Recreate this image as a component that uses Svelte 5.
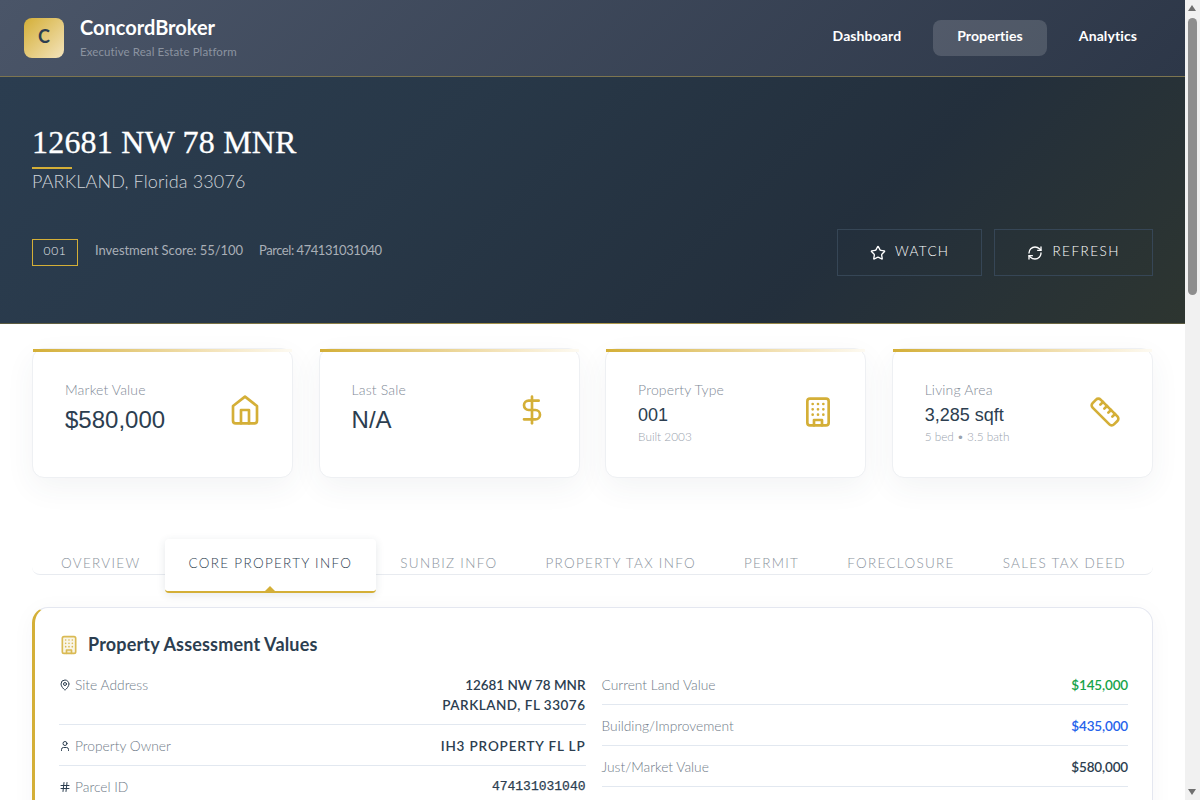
<script>
  const tabs = ['OVERVIEW', 'CORE PROPERTY INFO', 'SUNBIZ INFO', 'PROPERTY TAX INFO', 'PERMIT', 'FORECLOSURE', 'SALES TAX DEED'];
  const rightRows = [
    { label: 'Current Land Value', value: '$145,000', cls: 'green' },
    { label: 'Building/Improvement', value: '$435,000', cls: 'blue' },
    { label: 'Just/Market Value', value: '$580,000', cls: '' },
    { label: 'Assessed Value', value: '$580,000', cls: '' }
  ];
</script>

<div class="page">
  <header class="topbar">
    <div class="brand">
      <div class="logo">C</div>
      <div class="brand-text">
        <div class="brand-name">ConcordBroker</div>
        <div class="brand-sub">Executive Real Estate Platform</div>
      </div>
    </div>
    <nav class="nav">
      <span class="nav-item">Dashboard</span>
      <span class="nav-item active">Properties</span>
      <span class="nav-item">Analytics</span>
    </nav>
  </header>

  <section class="hero">
    <h1>12681 NW 78 MNR</h1>
    <div class="rule"></div>
    <div class="city">PARKLAND, Florida 33076</div>
    <div class="hero-row">
      <div class="meta">
        <span class="chip">001</span>
        <span class="meta-text">Investment Score: 55/100</span>
        <span class="meta-text parcel">Parcel: 474131031040</span>
      </div>
      <div class="actions">
        <span class="btn">
          <svg viewBox="0 0 24 24" class="btn-icon"><path d="M11.525 2.295a.53.53 0 0 1 .95 0l2.31 4.679a2.123 2.123 0 0 0 1.595 1.16l5.166.756a.53.53 0 0 1 .294.904l-3.736 3.638a2.123 2.123 0 0 0-.611 1.878l.882 5.14a.53.53 0 0 1-.771.56l-4.618-2.428a2.122 2.122 0 0 0-1.973 0L6.396 21.01a.53.53 0 0 1-.77-.56l.881-5.139a2.122 2.122 0 0 0-.611-1.879L2.16 9.795a.53.53 0 0 1 .294-.906l5.165-.755a2.122 2.122 0 0 0 1.597-1.16z"/></svg>
          <span class="btn-label watch">WATCH</span>
        </span>
        <span class="btn">
          <svg viewBox="0 0 24 24" class="btn-icon"><path d="M3 12a9 9 0 0 1 9-9 9.75 9.75 0 0 1 6.74 2.74L21 8"/><path d="M21 3v5h-5"/><path d="M21 12a9 9 0 0 1-9 9 9.75 9.75 0 0 1-6.74-2.74L3 16"/><path d="M8 16H3v5"/></svg>
          <span class="btn-label">REFRESH</span>
        </span>
      </div>
    </div>
  </section>

  <main class="main">
    <div class="stats">
      <div class="stat">
        <div class="stat-body">
          <div class="stat-label">Market Value</div>
          <div class="stat-value big">$580,000</div>
        </div>
        <svg viewBox="0 0 24 24" class="stat-icon"><path d="M3 9l9-7 9 7v11a2 2 0 0 1-2 2H5a2 2 0 0 1-2-2z"/><path d="M9 22V12h6v10"/></svg>
      </div>
      <div class="stat">
        <div class="stat-body">
          <div class="stat-label">Last Sale</div>
          <div class="stat-value big">N/A</div>
        </div>
        <svg viewBox="0 0 24 24" class="stat-icon"><path d="M12 2v20"/><path d="M17 5H9.5a3.5 3.5 0 0 0 0 7h5a3.5 3.5 0 0 1 0 7H6"/></svg>
      </div>
      <div class="stat tall">
        <div class="stat-body">
          <div class="stat-label">Property Type</div>
          <div class="stat-value">001</div>
          <div class="stat-note">Built 2003</div>
        </div>
        <svg viewBox="0 0 24 24" class="stat-icon"><rect x="4" y="2" width="16" height="20" rx="2"/><path d="M9 22v-4h6v4M8 6h.01M16 6h.01M12 6h.01M12 10h.01M12 14h.01M16 10h.01M16 14h.01M8 10h.01M8 14h.01"/></svg>
      </div>
      <div class="stat tall">
        <div class="stat-body">
          <div class="stat-label">Living Area</div>
          <div class="stat-value">3,285 sqft</div>
          <div class="stat-note">5 bed • 3.5 bath</div>
        </div>
        <svg viewBox="0 0 24 24" class="stat-icon"><path d="M21.3 15.3a2.4 2.4 0 0 1 0 3.4l-2.6 2.6a2.4 2.4 0 0 1-3.4 0L2.7 8.7a2.41 2.41 0 0 1 0-3.4l2.6-2.6a2.41 2.41 0 0 1 3.4 0Z"/><path d="m14.5 12.5 2-2M11.5 9.5l2-2M8.5 6.5l2-2M17.5 15.5l2-2"/></svg>
      </div>
    </div>

    <div class="tabs">
      {#each tabs as tab, i}
        <span class="tab" class:active={i === 1}>{tab}</span>
      {/each}
    </div>

    <section class="panel">
      <h2>
        <svg viewBox="0 0 24 24" class="title-icon"><rect x="4" y="2" width="16" height="20" rx="2"/><path d="M9 22v-4h6v4M8 6h.01M16 6h.01M12 6h.01M12 10h.01M12 14h.01M16 10h.01M16 14h.01M8 10h.01M8 14h.01"/></svg>
        Property Assessment Values
      </h2>
      <div class="columns">
        <div class="column">
          <div class="row">
            <span class="label"><svg viewBox="0 0 24 24" class="row-icon"><path d="M20 10c0 4.993-5.539 10.193-7.399 11.799a1 1 0 0 1-1.202 0C9.539 20.193 4 14.993 4 10a8 8 0 0 1 16 0"/><circle cx="12" cy="10" r="3"/></svg>Site Address</span>
            <span class="value"><span class="tight">12681 NW 78 MNR</span><br />PARKLAND, FL 33076</span>
          </div>
          <div class="row">
            <span class="label"><svg viewBox="0 0 24 24" class="row-icon"><path d="M19 21v-2a4 4 0 0 0-4-4H9a4 4 0 0 0-4 4v2"/><circle cx="12" cy="7" r="4"/></svg>Property Owner</span>
            <span class="value wide">IH3 PROPERTY FL LP</span>
          </div>
          <div class="row">
            <span class="label"><svg viewBox="0 0 24 24" class="row-icon"><path d="M4 9h16M4 15h16M10 3 8 21M16 3l-2 18"/></svg>Parcel ID</span>
            <span class="value mono">474131031040</span>
          </div>
        </div>
        <div class="column">
          {#each rightRows as r}
            <div class="row">
              <span class="label">{r.label}</span>
              <span class="value money {r.cls}">{r.value}</span>
            </div>
          {/each}
        </div>
      </div>
    </section>
  </main>
</div>

<div class="scrollbar" aria-hidden="true">
  <span class="arrow up"></span>
  <span class="thumb"></span>
  <span class="arrow down"></span>
</div>

<style>
  :global(body) {
    margin: 0;
    background: #fff;
  }
  .page {
    min-height: 2204px;
    margin-right: 15px;
    font-family: "Lato", "Liberation Sans", sans-serif;
    color: #2c3e50;
    background: #fff;
  }
  svg {
    fill: none;
    stroke: currentColor;
    stroke-width: 2;
    stroke-linecap: round;
    stroke-linejoin: round;
    flex: none;
  }

  .scrollbar {
    position: fixed;
    top: 0;
    right: 0;
    bottom: 0;
    width: 15px;
    background: #f1f1f1;
  }
  .thumb {
    position: absolute;
    left: 3px;
    top: 18px;
    width: 9px;
    height: 277px;
    border-radius: 5px;
    background: #8e8e8e;
  }
  .arrow {
    position: absolute;
    left: 3px;
    border-left: 4.5px solid transparent;
    border-right: 4.5px solid transparent;
  }
  .arrow.up {
    top: 5px;
    border-bottom: 6px solid #707070;
  }
  .arrow.down {
    bottom: 5px;
    border-top: 6px solid #707070;
  }

  .topbar {
    height: 76px;
    box-sizing: content-box;
    border-bottom: 1px solid #7d7550;
    background: linear-gradient(135deg, #4a5568 0%, #2d3748 100%);
    display: flex;
    align-items: center;
    justify-content: space-between;
    padding: 0 24px;
  }
  .brand {
    display: flex;
    align-items: center;
    gap: 16px;
  }
  .logo {
    box-sizing: border-box;
    width: 40px;
    height: 40px;
    padding-bottom: 4px;
    border-radius: 8px;
    background: linear-gradient(135deg, #d4af37 0%, #f4e4bc 100%);
    color: #2c3e50;
    font-weight: 700;
    font-size: 18px;
    display: flex;
    align-items: center;
    justify-content: center;
  }
  .brand-text {
    padding-bottom: 2px;
  }
  .brand-name {
    color: #fff;
    font-size: 20px;
    font-weight: 700;
    line-height: 24px;
  }
  .brand-sub {
    color: #8b93a0;
    font-size: 11.5px;
    line-height: 16px;
    margin-top: 5px;
    letter-spacing: 0.1px;
  }
  .nav {
    display: flex;
    gap: 8px;
  }
  .nav-item {
    color: #fff;
    font-size: 14px;
    font-weight: 700;
    line-height: 32px;
    padding: 0 24px 4px;
    border-radius: 8px;
    letter-spacing: 0.1px;
  }
  .nav-item.active {
    background: rgba(255, 255, 255, 0.15);
  }

  .hero {
    height: 246px;
    box-sizing: content-box;
    padding: 0 32px;
    border-bottom: 1px solid;
    border-image: linear-gradient(90deg, #5a5a40, #b09a4a 50%, #5a5a40) 1;
    background: linear-gradient(135deg, #2b3d50 0%, #283848 35%, #232f3c 70%, #2d3530 100%);
    overflow: hidden;
  }
  h1 {
    margin: 45px 0 0;
    font-family: "Liberation Serif", serif;
    font-size: 32px;
    font-weight: 400;
    line-height: 40px;
    color: #fff;
    letter-spacing: 0.2px;
    -webkit-text-stroke: 0.3px #fff;
  }
  .rule {
    width: 40px;
    height: 2px;
    margin-top: 5px;
    background: #d4af37;
  }
  .city {
    margin-top: 1px;
    color: #d0d4d9;
    font-size: 18px;
    line-height: 22px;
    font-weight: 300;
    letter-spacing: 0.15px;
  }
  .hero-row {
    display: flex;
    align-items: center;
    justify-content: space-between;
    margin-top: 37px;
  }
  .meta {
    display: flex;
    align-items: center;
    gap: 16px;
  }
  .chip {
    box-sizing: border-box;
    width: 46px;
    height: 27px;
    border: 1px solid #d4af37;
    color: #e5e8ec;
    font-size: 12px;
    font-weight: 300;
    line-height: 21px;
    text-align: center;
    letter-spacing: 0.7px;
    margin-right: 1px;
  }
  .meta-text {
    color: #a9afb7;
    font-size: 13px;
    line-height: 24px;
    padding-bottom: 5px;
    letter-spacing: -0.04px;
  }
  .meta-text.parcel {
    letter-spacing: -0.45px;
  }
  .actions {
    display: flex;
    gap: 12px;
  }
  .btn {
    box-sizing: border-box;
    height: 47px;
    padding: 0 32px;
    border: 1px solid #364656;
    color: #fff;
    font-size: 13.5px;
    font-weight: 300;
    letter-spacing: 1.5px;
    display: flex;
    align-items: center;
    gap: 9px;
  }
  .btn-label {
    margin-bottom: 4px;
  }
  .btn-label.watch {
    letter-spacing: 1.35px;
  }
  .btn-icon {
    width: 16px;
    height: 16px;
  }

  .main {
    padding: 24px 32px 0;
  }
  .stats {
    display: grid;
    grid-template-columns: repeat(4, 1fr);
    gap: 25.2px;
    margin-bottom: 61.6px;
  }
  .stat {
    box-sizing: border-box;
    height: 130.4px;
    position: relative;
    padding: 32px 32px 0;
    border: 1px solid #eef0f3;
    border-radius: 12px;
    background: #fff;
    box-shadow: 0 10px 30px rgba(44, 62, 80, 0.06);
    display: flex;
    justify-content: space-between;
    align-items: flex-start;
  }
  .stat::before {
    content: "";
    position: absolute;
    left: 0;
    right: 0;
    top: 0;
    height: 3px;
    background: linear-gradient(90deg, #d4af37, #f4e4bc 70%, #fdfaf2);
  }
  .stat-label {
    color: #7f8a97;
    font-size: 14px;
    font-weight: 300;
    line-height: 18px;
    letter-spacing: 0.15px;
  }
  .stat-value {
    font-family: "Liberation Sans", sans-serif;
    font-size: 18px;
    line-height: 24px;
    margin-top: 4px;
    color: #2c3e50;
  }
  .stat-value.big {
    font-size: 24px;
    line-height: 28px;
    margin-top: 7px;
  }
  .stat-note {
    color: #9aa3ae;
    font-size: 11.8px;
    font-weight: 300;
    line-height: 16px;
    margin-top: 2px;
  }
  .stat-icon {
    width: 32px;
    height: 32px;
    color: #d4af37;
    margin-top: 13px;
    margin-right: -1px;
  }
  .stat.tall .stat-icon {
    margin-top: 15px;
  }

  .tabs {
    height: 34px;
    display: flex;
    border-bottom: 1px solid #e8ebf0;
    border-radius: 0 0 8px 8px;
    padding-left: 5px;
    align-items: flex-start;
    margin-bottom: 32px;
  }
  .tab {
    padding: 13px 24px 0;
    line-height: 20px;
    font-size: 13.5px;
    font-weight: 300;
    color: #8a939d;
    letter-spacing: 1.3px;
    white-space: nowrap;
  }
  .tab.active {
    position: relative;
    margin-top: -1px;
    padding: 14px 24px 18px;
    background: #fff;
    color: #2c3e50;
    border-bottom: 2px solid #d4af37;
    border-radius: 4px;
    box-shadow: 0 2px 8px rgba(44, 62, 80, 0.12);
  }
  .tab.active::after {
    content: "";
    position: absolute;
    left: 50%;
    bottom: 0;
    margin-left: -5px;
    border-left: 5px solid transparent;
    border-right: 5px solid transparent;
    border-bottom: 5px solid #d4af37;
  }

  .panel {
    box-sizing: border-box;
    padding: 22px 24px 24px;
    border: 1px solid #e4e7f0;
    border-left: 3px solid #d4af37;
    border-radius: 16px;
    background: #fff;
    box-shadow: 0 4px 24px rgba(44, 62, 80, 0.04);
  }
  h2 {
    margin: 0 0 6px;
    font-size: 18px;
    font-weight: 700;
    line-height: 28px;
    color: #2c3e50;
    display: flex;
    align-items: center;
    gap: 9px;
    letter-spacing: 0.17px;
  }
  .title-icon {
    width: 20px;
    height: 20px;
    margin-top: 3px;
    color: #d4af37;
    fill: rgba(212, 175, 55, 0.14);
    opacity: 0.85;
  }
  .columns {
    display: grid;
    grid-template-columns: 1fr 1fr;
    gap: 16px;
  }
  .row {
    display: flex;
    justify-content: space-between;
    align-items: flex-start;
    padding: 11px 0 9px;
    border-bottom: 1px solid #e2e8f0;
    line-height: 20px;
  }
  .label {
    color: #6f7b88;
    font-size: 13.8px;
    font-weight: 300;
    display: flex;
    align-items: center;
    gap: 4px;
  }
  .row-icon {
    width: 12px;
    height: 12px;
    color: #2c3e50;
  }
  .value {
    color: #2c3e50;
    font-size: 13.5px;
    font-weight: 600;
    text-align: right;
    letter-spacing: 0.5px;
  }
  .tight {
    letter-spacing: -0.03px;
  }
  .value.wide {
    letter-spacing: 0.85px;
  }
  .value.mono {
    font-family: "Liberation Mono", monospace;
    font-size: 13px;
    font-weight: 400;
    letter-spacing: 0;
    -webkit-text-stroke: 0.25px #2c3e50;
  }
  .value.money {
    letter-spacing: -0.15px;
  }
  .value.money.green {
    color: #16a34a;
  }
  .value.money.blue {
    color: #2563eb;
  }
</style>
